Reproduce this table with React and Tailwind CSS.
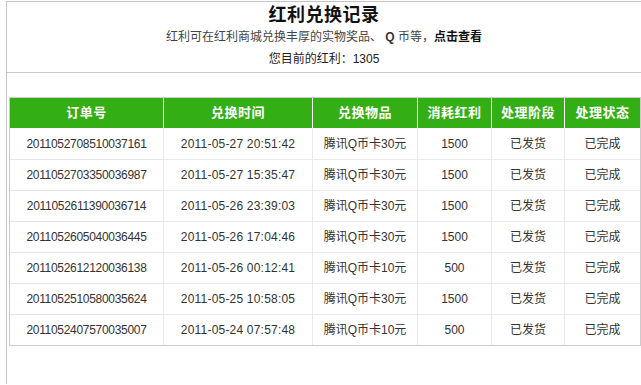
import React from "react";

const rows = [
  ["2011052708510037161", "2011-05-27 20:51:42", "腾讯Q币卡30元", "1500"],
  ["2011052703350036987", "2011-05-27 15:35:47", "腾讯Q币卡30元", "1500"],
  ["2011052611390036714", "2011-05-26 23:39:03", "腾讯Q币卡30元", "1500"],
  ["2011052605040036445", "2011-05-26 17:04:46", "腾讯Q币卡30元", "1500"],
  ["2011052612120036138", "2011-05-26 00:12:41", "腾讯Q币卡10元", "500"],
  ["2011052510580035624", "2011-05-25 10:58:05", "腾讯Q币卡30元", "1500"],
  ["2011052407570035007", "2011-05-24 07:57:48", "腾讯Q币卡10元", "500"],
];

const heads = ["订单号", "兑换时间", "兑换物品", "消耗红利", "处理阶段", "处理状态"];
const widths = [153, 149, 105, 74, 73, 76];

export default function App() {
  return (
    <div
      className="w-[641px] h-[385px] bg-white overflow-hidden pl-[6px] pt-[1px]"
      style={{ fontFamily: '"Liberation Sans", "Noto Sans CJK SC", sans-serif' }}
    >
      <div className="h-[383px] border-l border-t border-[#c4c4c4]">
        <div className="h-[71px] border-b border-[#c8c8c8] flex flex-col items-center">
          <div className="mt-[2px] h-[22px] leading-[22px] text-[18px] font-bold text-[#111] tracking-[0.5px]">红利兑换记录</div>
          <div className="mt-[1px] h-[20px] leading-[20px] text-[12px] text-[#444]">
            红利可在红利商城兑换丰厚的实物奖品、<span className="font-bold text-[#333]"> Q </span>币等，<span className="font-bold text-[#111]">点击查看</span>
          </div>
          <div className="mt-[2px] h-[20px] leading-[20px] text-[12px] text-[#222]">您目前的红利：1305</div>
        </div>
        <table
          className="ml-[2px] mt-[24px] w-[630px] border border-[#cccccc] text-[12px] text-[#333] table-fixed"
          style={{ borderCollapse: "separate", borderSpacing: 0 }}
        >
          <colgroup>
            {widths.map((w, i) => (
              <col key={i} style={{ width: w }} />
            ))}
          </colgroup>
          <thead>
            <tr className="bg-[#33ae15]">
              {heads.map((h, i) => (
                <th
                  key={i}
                  className={`h-[30px] p-0 text-center text-[13px] font-bold text-white tracking-[0.5px] ${i > 0 ? "border-l border-white" : ""}`}
                >
                  {h}
                </th>
              ))}
            </tr>
          </thead>
          <tbody>
            {rows.map((r, ri) => (
              <tr key={ri}>
                {[...r, "已发货", "已完成"].map((c, ci) => (
                  <td
                    key={ci}
                    className={`h-[31px] p-0 text-center ${ri > 0 ? "border-t border-[#e6e6e6]" : ""} ${ci > 0 ? "border-l border-[#eaeaea]" : ""} ${ci === 0 ? "tracking-[-0.3px]" : ""} ${ci === 1 ? "tracking-[0.2px]" : ""}`}
                  >
                    {c}
                  </td>
                ))}
              </tr>
            ))}
          </tbody>
        </table>
      </div>
    </div>
  );
}
